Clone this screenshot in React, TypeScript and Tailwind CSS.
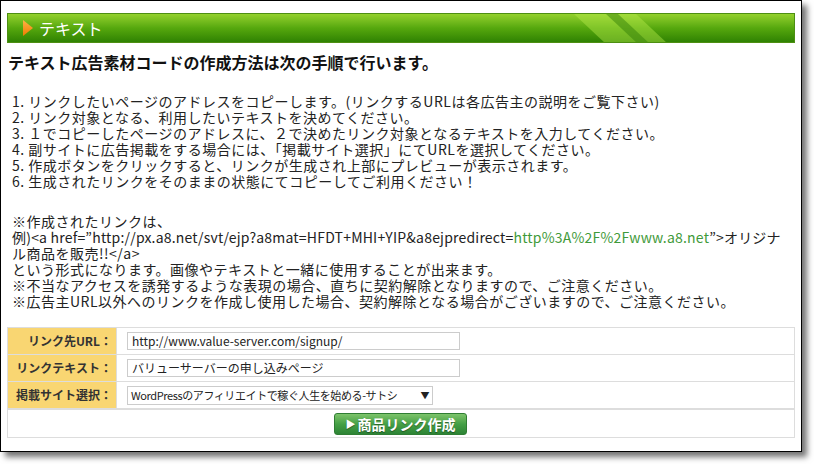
const font = { fontFamily: '"Noto Sans CJK JP", "Noto Sans", sans-serif' }

const steps = [
  "1. リンクしたいページのアドレスをコピーします。(リンクするURLは各広告主の説明をご覧下さい)",
  "2. リンク対象となる、利用したいテキストを決めてください。",
  "3. １でコピーしたページのアドレスに、２で決めたリンク対象となるテキストを入力してください。",
  "4. 副サイトに広告掲載をする場合には、「掲載サイト選択」にてURLを選択してください。",
  "5. 作成ボタンをクリックすると、リンクが生成され上部にプレビューが表示されます。",
  "6. 生成されたリンクをそのままの状態にてコピーしてご利用ください！",
]

function HeaderBar() {
  return (
    <div className="relative mx-[6px] mt-[12px] h-[30px] overflow-hidden border border-[#4d8f12] bg-gradient-to-b from-[#93d12c] via-[#56a80e] to-[#2f8203] flex items-center">
      <svg className="absolute inset-0" width="784" height="30" viewBox="0 0 784 30">
        <polygon points="566,0 628,0 660,30 598,30" fill="#b4e84a" opacity="0.45" />
        <polygon points="598,0 610,0 642,30 630,30" fill="#2d7a05" opacity="0.45" />
      </svg>
      <svg className="relative ml-[14px]" width="12" height="18" viewBox="0 0 12 18">
        <defs>
          <linearGradient id="tri" x1="0" y1="0" x2="0" y2="1">
            <stop offset="0" stopColor="#ffb347" />
            <stop offset="1" stopColor="#f07c00" />
          </linearGradient>
        </defs>
        <polygon points="1,1 11,9 1,17" fill="url(#tri)" />
      </svg>
      <span className="relative ml-[5px] text-[16px] leading-none text-white">テキスト</span>
    </div>
  )
}

function Row({ label, children, last }: { label: string; children: React.ReactNode; last?: boolean }) {
  return (
    <div className={"flex h-[27px] " + (last ? "" : "border-b border-[#dddddd]")}>
      <div className="w-[108px] shrink-0 bg-[#f9d672] flex items-center justify-end pr-[4px] text-[12px] font-bold text-[#333] whitespace-nowrap">
        {label}
      </div>
      <div className="flex items-center pl-[10px] border-l border-[#dddddd]">{children}</div>
    </div>
  )
}

export default function App() {
  return (
    <div className="w-[814px] h-[464px] bg-white" style={font}>
      <div className="w-[802px] h-[452px] border border-black bg-white shadow-[5px_5px_6px_rgba(0,0,0,0.55)]">
        <HeaderBar />
        <h2 className="ml-[7px] mt-[9px] text-[16px] leading-[20px] font-bold text-[#111]">
          テキスト広告素材コードの作成方法は次の手順で行います。
        </h2>
        <div className="ml-[11px] mt-[21px] text-[14px] leading-[16px] tracking-[0.5px] text-[#222] whitespace-nowrap">
          {steps.map((s) => (
            <div key={s}>{s}</div>
          ))}
        </div>
        <div className="ml-[11px] mt-[24px] text-[14px] leading-[16px] tracking-[0.5px] text-[#222] whitespace-nowrap">
          <div>※作成されたリンクは、</div>
          <div className="tracking-[0.2px]">
            例)&lt;a href=”http://px.a8.net/svt/ejp?a8mat=HFDT+MHI+YIP&amp;a8ejpredirect=<span className="text-[#3f9a3a]">http%3A%2F%2Fwww.a8.net</span>”&gt;オリジナ
          </div>
          <div>ル商品を販売!!&lt;/a&gt;</div>
          <div>という形式になります。画像やテキストと一緒に使用することが出来ます。</div>
          <div>※不当なアクセスを誘発するような表現の場合、直ちに契約解除となりますので、ご注意ください。</div>
          <div>※広告主URL以外へのリンクを作成し使用した場合、契約解除となる場合がございますので、ご注意ください。</div>
        </div>
        <div className="mx-[6px] mt-[18px] border border-[#dddddd]">
          <Row label="リンク先URL：">
            <div className="w-[333px] h-[18px] border border-[#cccccc] px-[4px] text-[12px] leading-[16px] text-[#222]">
              http://www.value-server.com/signup/
            </div>
          </Row>
          <Row label="リンクテキスト：">
            <div className="w-[333px] h-[18px] border border-[#cccccc] px-[4px] text-[12px] leading-[16px] text-[#222]">
              バリューサーバーの申し込みページ
            </div>
          </Row>
          <Row label="掲載サイト選択：">
            <div className="w-[306px] h-[19px] border border-[#cccccc] px-[3px] text-[11px] tracking-[-0.4px] leading-[17px] text-[#222] flex items-center justify-between whitespace-nowrap overflow-hidden">
              <span>WordPressのアフィリエイトで稼ぐ人生を始める-サトシ</span>
              <span className="text-[9px] ml-[3px]">▼</span>
            </div>
          </Row>
          <div className="flex h-[28px] border-t border-[#dddddd] items-center">
            <div className="w-[326px] shrink-0" />
            <button className="h-[22px] w-[133px] rounded-[3px] border border-[#2f7d33] bg-gradient-to-b from-[#7cc46a] via-[#45a046] to-[#2d8435] text-[14px] font-bold text-white [text-shadow:0_1px_1px_rgba(0,0,0,0.4)] flex items-center justify-center leading-none">
              <span className="text-[10px] mr-[2px]">▶</span>商品リンク作成
            </button>
          </div>
        </div>
      </div>
    </div>
  )
}
